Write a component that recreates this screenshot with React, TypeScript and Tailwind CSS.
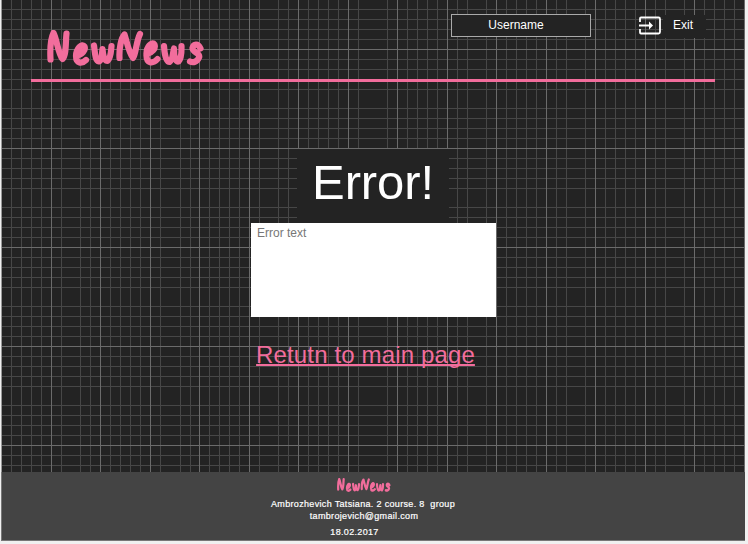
const verticals = [11,21,31,41,61,80,90,110,120,130,140,160,180,190,209,219,229,239,259,278,288,308,318,328,338,358,387,407,417,427,437,457,467,486,506,516,526,536,556,566,585,605,615,625,635,655,665,684,704,714,724,734];
const majorVerticals = [51,100,150,199,249,298,348,397,447,496,546,595,645,694,744];
const horizontals = [9,19,29,39,59,69,79,89,108,118,128,138,158,168,178,188,207,217,227,237,257,267,277,287,306,316,326,336,356,366,376,386,405,415,425,435,455,465];
const majorHorizontals = [49,148,247,346,445];

function Grid() {
  return (
    <svg className="absolute inset-0" width="748" height="472" shapeRendering="crispEdges">
      {verticals.map((x) => <rect key={x} x={x} y={0} width={1} height={472} fill="#474747" />)}
      {horizontals.map((y) => <rect key={y} x={2} y={y} width={743} height={1} fill="#474747" />)}
      {majorVerticals.map((x) => <rect key={x} x={x} y={0} width={1} height={472} fill="#6b6b6b" />)}
      {majorHorizontals.map((y) => <rect key={y} x={2} y={y} width={743} height={1} fill="#6b6b6b" />)}
    </svg>
  );
}

const letters = [
  'M3.500 29.500 C3 20 4 8 6.500 3 C10 10 11 23 15.500 29 C19.500 25 18.500 12 19.500 3.500',
  'M30 25.500 C35 25 39 20 37.500 16.500 C35 12.500 29 19 29 26 C29 34 35 34 39 30',
  'M47 15.500 C48 22 48 31 52 31.500 C54.500 31 55 24 55.500 19 C56 25 57 31 60.500 31 C64 28 64 21 64.500 16',
  'M72.500 28 C72 19 74 8 77.500 4.500 C80 12 81.500 22 86 28 C89 24 89 12 93 4',
  'M100 24 C105 23 109 18.500 107.500 14.500 C105 11 99 17 99.500 24.500 C99 34 106 34 110.500 29',
  'M117 16 C117.500 24 119 32 122.500 32 C126 30 125.500 24 127 18.500 C127 26 128 32 131.500 31.500 C135 28 134.500 21 134.500 16',
  'M153.500 18.500 C151 13 146.500 14 145.500 18 C145 22.500 154 23 152 27.500 C150 32 146 33 143 31.500',
];

function Logo({ className, weight }: { className: string; weight: number }) {
  return (
    <svg className={className} viewBox="0 0 158 36" preserveAspectRatio="none" role="img" aria-label="NewNews" fill="none" stroke="#f26d9c" strokeWidth={weight} strokeLinecap="round" strokeLinejoin="round">
      {letters.map((d) => <path key={d} d={d} />)}
    </svg>
  );
}

export default function App() {
  return (
    <div className="flex h-[544px] w-[748px] flex-col overflow-hidden bg-[#f0f0f0] pl-[2px] pr-[3px] font-['Liberation_Sans',Arial,sans-serif] text-white">
      <main className="relative h-[472px] shrink-0 bg-[#232323] shadow-[-1px_0_0_#999]">
        <div className="absolute inset-y-0 -left-[2px]"><Grid /></div>
        <div className="relative flex h-full flex-col items-center pr-px">
          <header className="flex h-[82px] w-[684px] shrink-0 items-start border-b-[3px] border-[#f26d9c] pl-[16px]">
            <Logo className="mt-[30px] h-[36px] w-[158px]" weight={6.2} />
            <div className="ml-[246px] mt-[14px] flex h-[23px] w-[140px] items-center justify-center border border-[#aaa] bg-[#232323] pr-[10px] text-[12px]">
              <span className="-mt-px">Username</span>
            </div>
            <div className="ml-[48px] mt-[14px] flex h-6 items-center">
              <svg width="23" height="20" viewBox="0 0 23 20" fill="none" stroke="white" strokeWidth="1.8">
                <path d="M1 6V2.500Q1 1.500 2 1.500H19.500Q21 1.500 21 3V16Q21 17.500 19.500 17.500H2Q1 17.500 1 16.500V13M0 9.500H11" />
                <path d="M10 5.500L14 9.500L10 13.500Z" fill="white" stroke="none" />
              </svg>
              <div className="ml-px flex h-[23px] w-[43px] items-center bg-[#232323] pl-[10px] text-[12px]"><span className="-mt-[2px]">Exit</span></div>
            </div>
          </header>
          <h1 className="mt-[67px] flex h-[74px] w-[152px] items-center justify-center bg-[#232323] pb-[6px] text-[49px] tracking-[-0.1px]">Error!</h1>
          <div className="-mr-px h-[94px] w-[245px] bg-white pl-[6px] pt-[2px] text-[12px] leading-4 text-[#777]">Error text</div>
          <a className="mt-[24px] mr-[15px] text-[24px] leading-7 tracking-[0.14px] text-[#f26d9c] underline decoration-2 [text-decoration-skip-ink:none]">Retutn to main page</a>
        </div>
      </main>
      <footer className="flex h-[69px] shrink-0 flex-col items-center border-b border-[#777] bg-[#444] text-[9px] leading-3 tracking-[0.33px] shadow-[-1px_0_0_#777]">
        <Logo className="mr-[19px] mt-[6px] h-[14px] w-[54px]" weight={6.5} />
        <p className="mr-[21px] mt-[6px] whitespace-pre [-webkit-text-stroke:0.2px_white]">Ambrozhevich Tatsiana. 2 course. 8  group</p>
        <p className="mr-[19px] [-webkit-text-stroke:0.2px_white]">tambrojevich@gmail.com</p>
        <p className="mr-[38px] mt-1 [-webkit-text-stroke:0.2px_white]">18.02.2017</p>
      </footer>
    </div>
  );
}
